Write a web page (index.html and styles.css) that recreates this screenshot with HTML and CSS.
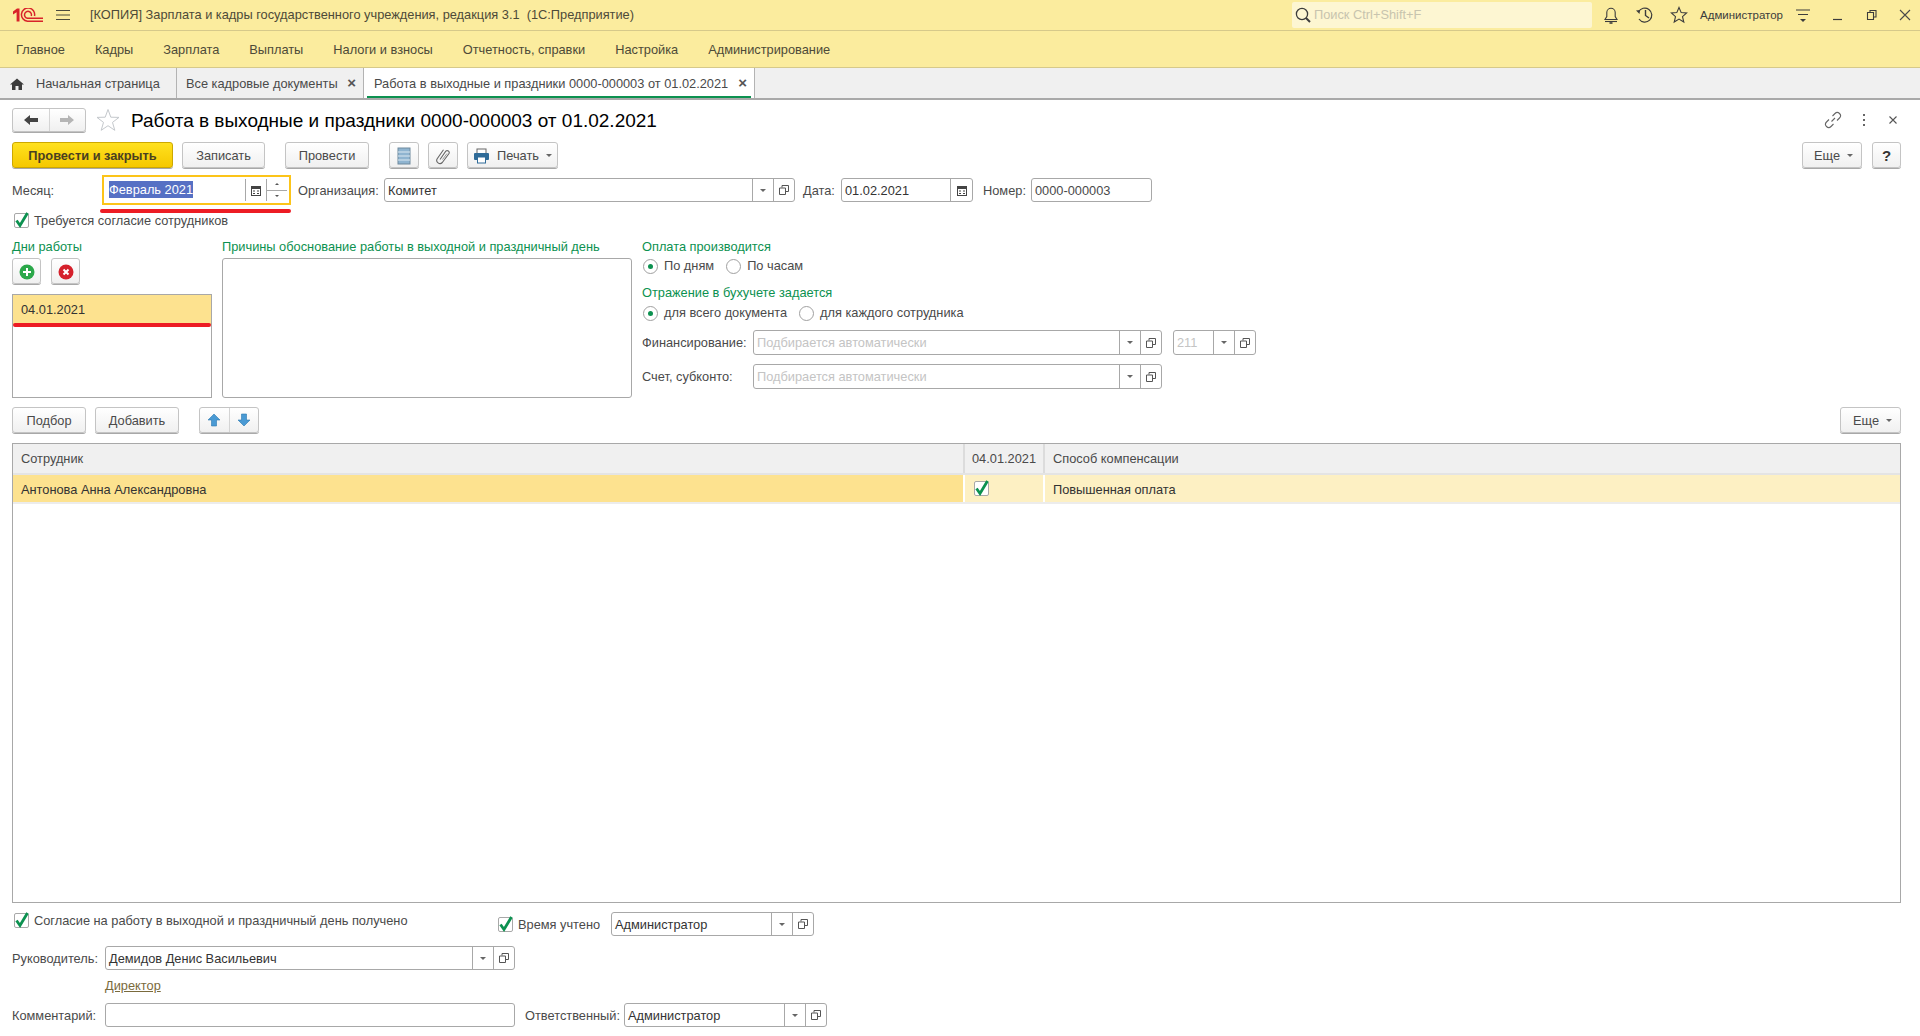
FILE: index.html
```html
<!DOCTYPE html>
<html lang="ru">
<head>
<meta charset="utf-8">
<title>Работа в выходные и праздники</title>
<link rel="stylesheet" href="styles.css">
</head>
<body>
<header class="topbar">
  <svg class="logo" width="30" height="14" viewBox="0 0 30 14"><path d="M0 3.500L4 .5H6.500V13.500H3.600V4.200L0 6.500Z" fill="#d8232a"/><path d="M21.500 8A6.600 6.600 0 1 0 14.500 13.200H30" fill="none" stroke="#d8232a" stroke-width="1.500"/><path d="M18.300 8A3.500 3.500 0 1 0 14.500 10.300H30" fill="none" stroke="#d8232a" stroke-width="1.500"/></svg>
  <svg class="burger" width="16" height="12" viewBox="0 0 16 12"><path d="M1 1.500H15M1 6H15M1 10.500H15" stroke="#4a4a3c" stroke-width="1.200"/></svg>
  <div class="apptitle">[КОПИЯ] Зарплата и кадры государственного учреждения, редакция 3.1&nbsp; (1С:Предприятие)</div>
  <div class="search">
    <svg width="18" height="18" viewBox="0 0 18 18"><circle cx="8" cy="8" r="5.600" fill="none" stroke="#3c3c3c" stroke-width="1.300"/><path d="M12 12L16 16" stroke="#3c3c3c" stroke-width="2"/></svg>
    <span>Поиск Ctrl+Shift+F</span>
  </div>
  <svg class="bell" width="18" height="20" viewBox="0 0 18 20"><path d="M3 14.500H15L13.200 11.500V7.500A4.200 4.200 0 0 0 4.800 7.500V11.500Z" fill="none" stroke="#3c3c3c" stroke-width="1.100"/><path d="M3 16.500H15" stroke="#3c3c3c" stroke-width="1.100"/><path d="M7.500 18H10.500" stroke="#3c3c3c" stroke-width="1.600"/></svg>
  <svg class="hist" width="20" height="20" viewBox="0 0 20 20"><path d="M3.500 7A7 7 0 1 1 4 14" fill="none" stroke="#3c3c3c" stroke-width="1.200"/><path d="M1 5.500L5 5L4.500 9Z" fill="#3c3c3c"/><path d="M10.500 5V10.500L14 13" fill="none" stroke="#3c3c3c" stroke-width="1.400"/></svg>
  <svg class="fav" width="20" height="20" viewBox="0 0 20 20"><path d="M10 2.500L12.200 7.600L17.600 8L13.500 11.600L14.800 17L10 14.100L5.200 17L6.500 11.600L2.400 8L7.800 7.600Z" fill="none" stroke="#3c3c3c" stroke-width="1.100"/></svg>
  <div class="user">Администратор</div>
  <svg class="more" width="16" height="16" viewBox="0 0 16 16"><path d="M1 3H15M3 7.500H13" stroke="#3c3c3c" stroke-width="1.200"/><path d="M5 12H11L8 15Z" fill="#3c3c3c"/></svg>
  <svg class="min" width="12" height="12" viewBox="0 0 12 12"><path d="M1 10.500H10" stroke="#3c3c3c" stroke-width="1.200"/></svg>
  <svg class="rest" width="12" height="12" viewBox="0 0 12 12"><path d="M1.500 3.500H7.500V10.500H1.500ZM4 3.500V1.500H10V8H7.500" fill="none" stroke="#3c3c3c" stroke-width="1.100"/></svg>
  <svg class="closex" width="14" height="14" viewBox="0 0 14 14"><path d="M2 2L12 12M12 2L2 12" stroke="#4a4a4a" stroke-width="1.100"/></svg>
</header>

<nav class="menubar">
  <a>Главное</a><a>Кадры</a><a>Зарплата</a><a>Выплаты</a><a>Налоги и взносы</a><a>Отчетность, справки</a><a>Настройка</a><a>Администрирование</a>
</nav>

<div class="tabs">
  <div class="tab tab-home">
    <svg width="14" height="12" viewBox="0 0 14 12"><path d="M7 .5L14 6.500H12V12H8.500V8H5.500V12H2V6.500H0Z" fill="#3c3c3c"/></svg>
    <span>Начальная страница</span>
  </div>
  <div class="tab tab-docs"><span>Все кадровые документы</span><b class="tabx">×</b></div>
  <div class="tab tab-active"><span>Работа в выходные и праздники 0000-000003 от 01.02.2021</span><b class="tabx">×</b></div>
</div>

<main class="form">
  <div class="titlerow">
    <div class="btngroup nav">
      <div class="navbtn"><svg width="14" height="10" viewBox="0 0 14 10"><path d="M0 5L6 0V3H14V7H6V10Z" fill="#444"/></svg></div>
      <div class="navbtn"><svg width="14" height="10" viewBox="0 0 14 10"><path d="M14 5L8 0V3H0V7H8V10Z" fill="#b5b5b5"/></svg></div>
    </div>
    <svg class="star" width="24" height="24" viewBox="0 0 24 24"><path d="M12 1.500L14.800 9.200L23 9.400L16.500 14.400L18.800 22.300L12 17.700L5.200 22.300L7.500 14.400L1 9.400L9.200 9.200Z" fill="none" stroke="#c4c8cc" stroke-width="1"/></svg>
    <h1>Работа в выходные и праздники 0000-000003 от 01.02.2021</h1>
    <div class="titleicons">
      <svg width="18" height="18" viewBox="0 0 18 18"><path d="M7.500 10.500L11 7M8.500 5L11 2.500A2.800 2.800 0 0 1 15.500 7L13 9.500M9.500 13L7 15.500A2.800 2.800 0 0 1 2.500 11L5 8.500" fill="none" stroke="#666" stroke-width="1.100"/></svg>
      <svg width="4" height="14" viewBox="0 0 4 14"><path d="M2 1V3M2 6V8M2 11V13" stroke="#666" stroke-width="2"/></svg>
      <svg width="10" height="10" viewBox="0 0 10 10"><path d="M1.500 1.500L8.500 8.500M8.500 1.500L1.500 8.500" stroke="#555" stroke-width="1.100"/></svg>
    </div>
  </div>

  <div class="toolbar">
    <div class="btn primary w161">Провести и закрыть</div>
    <div class="btn w83 ml9">Записать</div>
    <div class="btn w84 ml20">Провести</div>
    <div class="btn w30 ml20"><svg width="14" height="18" viewBox="0 0 14 18"><rect x="1" y="1" width="12" height="16" fill="#8fb4d0" stroke="#6f8a9e"/><path d="M1 5H13M1 9H13M1 13H13" stroke="#dbe8f1" stroke-width="1"/></svg></div>
    <div class="btn w30 ml9"><svg width="16" height="18" viewBox="0 0 16 18"><path d="M5 12.500L10.800 4.200A2 2 0 0 1 14 6.500L7.300 15.500A3.200 3.200 0 0 1 2.200 11.700L8.500 2.800" fill="none" stroke="#666" stroke-width="1.100"/><path d="M7.500 12.500L12 6.500" stroke="#999" stroke-width="1"/></svg></div>
    <div class="btn w91 ml9"><svg class="print" width="17" height="16" viewBox="0 0 17 16"><rect x="4" y="1" width="9" height="5" fill="#fff" stroke="#666"/><rect x="1" y="5" width="15" height="7" rx="1" fill="#2f6b98"/><rect x="4.500" y="9" width="8" height="6" fill="#fff" stroke="#2f6b98"/></svg>Печать<i class="caret"></i></div>
    <div class="spacer"></div>
    <div class="btn w60">Еще<i class="caret"></i></div>
    <div class="btn w29 ml10 help">?</div>
  </div>

  <div class="fieldrow">
    <label class="lbl w90">Месяц:</label>
    <div class="monthframe">
      <span class="val"><span class="selected">Февраль 2021</span></span>
      <span class="seg cal"><svg width="10" height="11" viewBox="0 0 10 11"><rect x=".5" y="1.500" width="9" height="9" fill="#fff" stroke="#444"/><rect x=".5" y="1" width="9" height="3" fill="#444"/><path d="M2 6H4M6 6H8M2 8.500H4M6 8.500H8" stroke="#444"/></svg></span>
      <span class="spin"><i class="up"></i><i class="down"></i></span>
      <span class="redline"></span>
    </div>
    <label class="lbl org">Организация:</label>
    <div class="field w411"><span class="val dark">Комитет</span><span class="seg drop"><i class="caret"></i></span><span class="seg open"><svg width="10" height="10" viewBox="0 0 10 10"><path d="M3 2.500V.5H9.500V6.500H7M.5 3H6.500V9.500H.5Z" fill="none" stroke="#555"/></svg></span></div>
    <label class="lbl date">Дата:</label>
    <div class="field w132"><span class="val dark">01.02.2021</span><span class="seg cal"><svg width="10" height="11" viewBox="0 0 10 11"><rect x=".5" y="1.500" width="9" height="9" fill="#fff" stroke="#444"/><rect x=".5" y="1" width="9" height="3" fill="#444"/><path d="M2 6H4M6 6H8M2 8.500H4M6 8.500H8" stroke="#444"/></svg></span></div>
    <label class="lbl num">Номер:</label>
    <div class="field w121"><span class="val">0000-000003</span></div>
  </div>

  <div class="checkrow">
    <span class="check"><svg width="16" height="18" viewBox="0 0 16 18"><path d="M2.500 9.500L6 14.500L13.500 2" fill="none" stroke="#0c9150" stroke-width="2.800"/></svg></span>
    <span class="lbl">Требуется согласие сотрудников</span>
  </div>

  <section class="columns">
    <div class="col-days">
      <div class="grouplbl">Дни работы</div>
      <div class="daybtns">
        <div class="btn w29"><svg width="16" height="16" viewBox="0 0 16 16"><circle cx="8" cy="8" r="7.500" fill="#2ba84a"/><path d="M8 4V12M4 8H12" stroke="#fff" stroke-width="2"/></svg></div>
        <div class="btn w29"><svg width="16" height="16" viewBox="0 0 16 16"><circle cx="8" cy="8" r="7.500" fill="#d5212c"/><path d="M5.500 5.500L10.500 10.500M10.500 5.500L5.500 10.500" stroke="#fff" stroke-width="2"/></svg></div>
      </div>
      <div class="daylist"><div class="dayrow">04.01.2021<span class="redline"></span></div></div>
    </div>
    <div class="col-reason">
      <div class="grouplbl">Причины обоснование работы в выходной и праздничный день</div>
      <div class="textbox"></div>
    </div>
    <div class="col-pay">
      <div class="grouplbl">Оплата производится</div>
      <div class="radios">
        <span class="radio on"></span><span class="lbl gapr">По дням</span>
        <span class="radio"></span><span class="lbl">По часам</span>
      </div>
      <div class="grouplbl second">Отражение в бухучете задается</div>
      <div class="radios lower">
        <span class="radio on"></span><span class="lbl gapr">для всего документа</span>
        <span class="radio"></span><span class="lbl">для каждого сотрудника</span>
      </div>
      <div class="payrow">
        <label class="lbl w111">Финансирование:</label>
        <div class="field w409"><span class="val ph">Подбирается автоматически</span><span class="seg drop"><i class="caret"></i></span><span class="seg open"><svg width="10" height="10" viewBox="0 0 10 10"><path d="M3 2.500V.5H9.500V6.500H7M.5 3H6.500V9.500H.5Z" fill="none" stroke="#555"/></svg></span></div>
        <div class="field w83 ml11"><span class="val ph">211</span><span class="seg drop"><i class="caret"></i></span><span class="seg open"><svg width="10" height="10" viewBox="0 0 10 10"><path d="M3 2.500V.5H9.500V6.500H7M.5 3H6.500V9.500H.5Z" fill="none" stroke="#555"/></svg></span></div>
      </div>
      <div class="payrow">
        <label class="lbl w111">Счет, субконто:</label>
        <div class="field w409"><span class="val ph">Подбирается автоматически</span><span class="seg drop"><i class="caret"></i></span><span class="seg open"><svg width="10" height="10" viewBox="0 0 10 10"><path d="M3 2.500V.5H9.500V6.500H7M.5 3H6.500V9.500H.5Z" fill="none" stroke="#555"/></svg></span></div>
      </div>
    </div>
  </section>

  <div class="toolbar second">
    <div class="btn w74">Подбор</div>
    <div class="btn w84 ml9">Добавить</div>
    <div class="btngroup arrows ml20">
      <div class="navbtn"><svg width="14" height="14" viewBox="0 0 14 14"><path d="M7 1L13 7H9.500V13H4.500V7H1Z" fill="#4a9ad4" stroke="#2c78b0" stroke-width=".6"/></svg></div>
      <div class="navbtn"><svg width="14" height="14" viewBox="0 0 14 14"><path d="M7 13L13 7H9.500V1H4.500V7H1Z" fill="#4a9ad4" stroke="#2c78b0" stroke-width=".6"/></svg></div>
    </div>
    <div class="spacer"></div>
    <div class="btn w61">Еще<i class="caret"></i></div>
  </div>

  <div class="table">
    <div class="thead">
      <div class="c1">Сотрудник</div><div class="c2">04.01.2021</div><div class="c3">Способ компенсации</div>
    </div>
    <div class="trow">
      <div class="c1 sel">Антонова Анна Александровна</div>
      <div class="c2 cur"><span class="check"><svg width="16" height="18" viewBox="0 0 16 18"><path d="M2.500 9.500L6 14.500L13.500 2" fill="none" stroke="#0c9150" stroke-width="2.800"/></svg></span></div>
      <div class="c3 cur">Повышенная оплата</div>
    </div>
  </div>

  <div class="bottomrow r1">
    <span class="check"><svg width="16" height="18" viewBox="0 0 16 18"><path d="M2.500 9.500L6 14.500L13.500 2" fill="none" stroke="#0c9150" stroke-width="2.800"/></svg></span>
    <span class="lbl agree">Согласие на работу в выходной и праздничный день получено</span>
    <span class="check timecheck"><svg width="16" height="18" viewBox="0 0 16 18"><path d="M2.500 9.500L6 14.500L13.500 2" fill="none" stroke="#0c9150" stroke-width="2.800"/></svg></span>
    <span class="lbl timelbl">Время учтено</span>
    <div class="field w203"><span class="val dark">Администратор</span><span class="seg drop"><i class="caret"></i></span><span class="seg open"><svg width="10" height="10" viewBox="0 0 10 10"><path d="M3 2.500V.5H9.500V6.500H7M.5 3H6.500V9.500H.5Z" fill="none" stroke="#555"/></svg></span></div>
  </div>
  <div class="bottomrow r2">
    <label class="lbl w93">Руководитель:</label>
    <div class="field w410"><span class="val dark">Демидов Денис Васильевич</span><span class="seg drop"><i class="caret"></i></span><span class="seg open"><svg width="10" height="10" viewBox="0 0 10 10"><path d="M3 2.500V.5H9.500V6.500H7M.5 3H6.500V9.500H.5Z" fill="none" stroke="#555"/></svg></span></div>
  </div>
  <div class="linkrow"><a class="link">Директор</a></div>
  <div class="bottomrow r4">
    <label class="lbl w93">Комментарий:</label>
    <div class="field w410"></div>
    <label class="lbl resp">Ответственный:</label>
    <div class="field w203"><span class="val dark">Администратор</span><span class="seg drop"><i class="caret"></i></span><span class="seg open"><svg width="10" height="10" viewBox="0 0 10 10"><path d="M3 2.500V.5H9.500V6.500H7M.5 3H6.500V9.500H.5Z" fill="none" stroke="#555"/></svg></span></div>
  </div>
</main>
</body>
</html>
```
FILE: styles.css
```css
* { box-sizing: border-box; }
html, body { margin: 0; padding: 0; }
body { width: 1920px; height: 1036px; overflow: hidden; background: #fff; font: 12.8px/16px "Liberation Sans", Arial, sans-serif; color: #4a4a4a; }
svg { display: block; flex: none; }

.topbar { height: 31px; background: #fbec9e; border-bottom: 1px solid #d6c98a; display: flex; align-items: center; }
.logo { margin-left: 13px; }
.burger { margin-left: 12px; }
.apptitle { margin-left: 19px; width: 1202px; color: #4d4a38; white-space: nowrap; }
.search { width: 300px; height: 26px; background: #fdf6d2; border-radius: 2px; display: flex; align-items: center; gap: 2px; padding-left: 2px; color: #c8c4ae; }
.bell { margin-left: 10px; }
.hist { margin-left: 15px; }
.fav { margin-left: 14px; }
.user { margin-left: 11px; width: 82px; font-size: 11.5px; color: #3c3c3c; white-space: nowrap; }
.more { margin-left: 13px; }
.min { margin-left: 21px; }
.rest { margin-left: 22px; }
.closex { margin-left: 20px; }

.menubar { height: 37px; background: #fbec9e; border-bottom: 1px solid #d6c98a; display: flex; align-items: center; padding: 1px 0 0 16px; gap: 30px; color: #4d4a38; }
.menubar a { white-space: nowrap; }

.tabs { height: 32px; background: #f0f0f0; border-bottom: 2px solid #a9a9a9; display: flex; }
.tab { display: flex; align-items: center; border-right: 1px solid #b3b3b3; position: relative; white-space: nowrap; height: 30px; padding-top: 1px; color: #4a4a4a; }
.tab-home { width: 177px; padding-left: 10px; gap: 12px; }
.tab-docs { width: 187px; padding-left: 9px; }
.tab-active { width: 391px; padding-left: 10px; background: #fff; }
.tab-active::after { content: ""; position: absolute; left: 3px; right: 3px; bottom: 0; height: 2px; background: #0c9150; }
.tabx { position: absolute; right: 7px; top: 6px; font: bold 15px/18px "Liberation Sans", sans-serif; color: #555; }

.form { padding: 8px 19px 0 12px; }
.titlerow { height: 24px; display: flex; align-items: center; }
.btngroup { display: flex; background: linear-gradient(#fff, #f0f0f0); border: 1px solid #c4c4c4; border-radius: 3px; box-shadow: 0 1px 0 #aaa; height: 24px; }
.btngroup.nav { width: 74px; }
.navbtn { flex: 1; display: flex; align-items: center; justify-content: center; }
.navbtn + .navbtn { border-left: 1px solid #d4d4d4; }
.star { margin-left: 10px; }
h1 { margin: 0 0 0 11px; padding-top: 1px; font: 400 19px/24px "Liberation Sans", sans-serif; color: #000; white-space: nowrap; }
.titleicons { margin-left: auto; display: flex; align-items: center; padding-right: 3px; }
.titleicons svg:nth-child(1) { margin-right: 20px; }
.titleicons svg:nth-child(2) { margin-right: 22px; }

.toolbar { display: flex; height: 27px; margin-top: 10px; align-items: flex-start; }
.toolbar.second { margin-top: 8px; }
.spacer { flex: 1; }
.btn { height: 26px; padding-top: 1px; display: flex; align-items: center; justify-content: center; background: linear-gradient(#fff, #f0f0f0); border: 1px solid #c4c4c4; border-radius: 3px; box-shadow: 0 1px 0 #a8a8a8; color: #4a4a4a; white-space: nowrap; flex: none; }
.btn.primary { background: linear-gradient(#ffe11f, #f5c800); border-color: #cda800; font-weight: 700; color: #4a4020; }
.help { font-size: 15px; font-weight: 700; color: #333; }
.print { margin-right: 7px; }
.caret { display: inline-block; border: 3px solid transparent; border-top: 3px solid #666; border-bottom: 0; width: 0; height: 0; margin-left: 7px; }
.w161 { width: 161px; } .w83 { width: 83px; } .w84 { width: 84px; } .w30 { width: 30px; } .w91 { width: 91px; } .w60 { width: 60px; padding-left: 3px; } .w29 { width: 29px; } .w74 { width: 74px; } .w61 { width: 61px; padding-left: 4px; }
.ml9 { margin-left: 9px; } .ml10 { margin-left: 10px; } .ml20 { margin-left: 20px; } .ml11 { margin-left: 11px; }
.btngroup.arrows { width: 60px; height: 26px; }

.fieldrow { display: flex; height: 24px; margin-top: 9px; align-items: center; }
.lbl { color: #4a4a4a; white-space: nowrap; flex: none; padding-top: 1px; }
.radios .lbl { padding-top: 0; }
.w90 { width: 90px; }
.field { height: 24px; border: 1px solid #a8a8a8; border-radius: 3px; background: #fff; display: flex; align-items: stretch; flex: none; }
.val { flex: 1; min-width: 0; line-height: 24px; padding-left: 3px; color: #4a4a4a; white-space: nowrap; }
.val.dark { color: #333; }
.val.ph { color: #c4c4c4; }
.seg { width: 21px; border-left: 1px solid #a8a8a8; display: flex; align-items: center; justify-content: center; flex: none; }
.seg.cal { width: 22px; }
.seg .caret { margin-left: 0; }
.monthframe { width: 189px; height: 30px; border: 2px solid #fcc419; display: flex; align-items: center; position: relative; flex: none; padding: 1px 2px; background: #fff; }
.monthframe .val { line-height: 24px; padding-left: 3px; }
.monthframe .seg.cal { height: 22px; width: 21px; }
.selected { background: #5670c4; color: #fff; padding: 1px 0; }
.spin { width: 21px; height: 22px; border-left: 1px solid #a8a8a8; display: flex; flex-direction: column; flex: none; }
.spin i { flex: 1; display: flex; align-items: center; justify-content: center; position: relative; }
.spin .up { border-bottom: 1px solid #a8a8a8; }
.spin .up::after { content: ""; border: 2px solid transparent; border-bottom: 2px solid #555; border-top: 0; }
.spin .down::after { content: ""; border: 2px solid transparent; border-top: 2px solid #555; border-bottom: 0; }
.redline { position: absolute; height: 4px; background: #ed1c24; border-radius: 2px; }
.monthframe .redline { left: -4px; right: -2px; top: 32px; }
.org { margin-left: 7px; width: 86px; }
.w411 { width: 411px; }
.date { margin-left: 8px; width: 38px; }
.w132 { width: 132px; }
.num { margin-left: 10px; width: 48px; }
.w121 { width: 121px; }

.checkrow { display: flex; align-items: center; height: 16px; margin-top: 10px; padding-left: 2px; }
.check { width: 15px; height: 15px; border: 1px solid #a8a8a8; border-radius: 2px; background: #fff; position: relative; flex: none; display: block; }
.check svg { position: absolute; left: -1px; top: -3px; }
.checkrow .lbl { margin-left: 5px; }

.columns { display: flex; gap: 10px; margin-top: 11px; height: 160px; }
.col-days { width: 200px; }
.col-reason { width: 410px; }
.col-pay { width: 620px; }
.grouplbl { color: #0c9150; height: 16px; line-height: 16px; white-space: nowrap; }
.grouplbl.second { margin-top: 11px; }
.daybtns { display: flex; gap: 10px; margin-top: 3px; }
.daylist { margin-top: 10px; height: 104px; border: 1px solid #a8a8a8; }
.dayrow { height: 30px; background: #fde28f; padding-left: 8px; line-height: 30px; position: relative; color: #333; }
.dayrow .redline { left: 0; right: 0; bottom: -2px; }
.textbox { margin-top: 3px; height: 140px; border: 1px solid #a8a8a8; border-radius: 3px; }
.radios { display: flex; align-items: center; height: 16px; margin-top: 3px; }
.radios.lower { margin-top: 4px; }
.radio { width: 15px; height: 15px; border: 1px solid #a0a0a0; border-radius: 50%; margin-left: 1px; margin-right: 6px; flex: none; position: relative; background: #fff; }
.radio.on::after { content: ""; position: absolute; left: 4px; top: 4px; width: 5px; height: 5px; border-radius: 50%; background: #0c9150; }
.gapr { margin-right: 11px; }
.payrow { display: flex; align-items: center; height: 25px; margin-top: 9px; }
.payrow .field { height: 25px; }
.w111 { width: 111px; }
.w409 { width: 409px; }

.table { margin-top: 9px; height: 460px; border: 1px solid #a8a8a8; }
.thead { display: flex; height: 31px; background: #f0f0f0; border-bottom: 2px solid #e4e4e4; }
.trow { display: flex; height: 29px; border-bottom: 2px solid #ececec; }
.c1 { flex: 1; padding-left: 8px; line-height: 29px; }
.c2 { width: 80px; border-left: 2px solid #fff; padding-left: 7px; line-height: 29px; }
.c3 { width: 857px; border-left: 2px solid #fff; padding-left: 8px; line-height: 29px; }
.thead .c2, .thead .c3 { border-left-color: #dcdcdc; }
.sel { background: #fde28f; color: #333; }
.cur { background: #fdf0c3; color: #333; }
.c2 .check { margin-top: 6px; margin-left: 2px; }

.bottomrow { display: flex; align-items: center; }
.bottomrow.r1 { margin-top: 9px; height: 24px; padding-left: 2px; }
.r1 > .check { margin-top: -7px; }
.r1 > .agree { margin-left: 5px; width: 464px; margin-top: -7px; }
.r1 > .timecheck { margin-top: 0; }
.timelbl { margin-left: 5px; width: 93px; }
.w203 { width: 203px; }
.bottomrow.r2 { margin-top: 10px; height: 24px; }
.w93 { width: 93px; }
.w410 { width: 410px; }
.linkrow { height: 16px; margin-top: 8px; margin-bottom: -1px; padding-left: 93px; }
.link { color: #7a6a3c; text-decoration: underline; }
.bottomrow.r4 { margin-top: 10px; height: 24px; }
.resp { margin-left: 10px; width: 99px; }
```
